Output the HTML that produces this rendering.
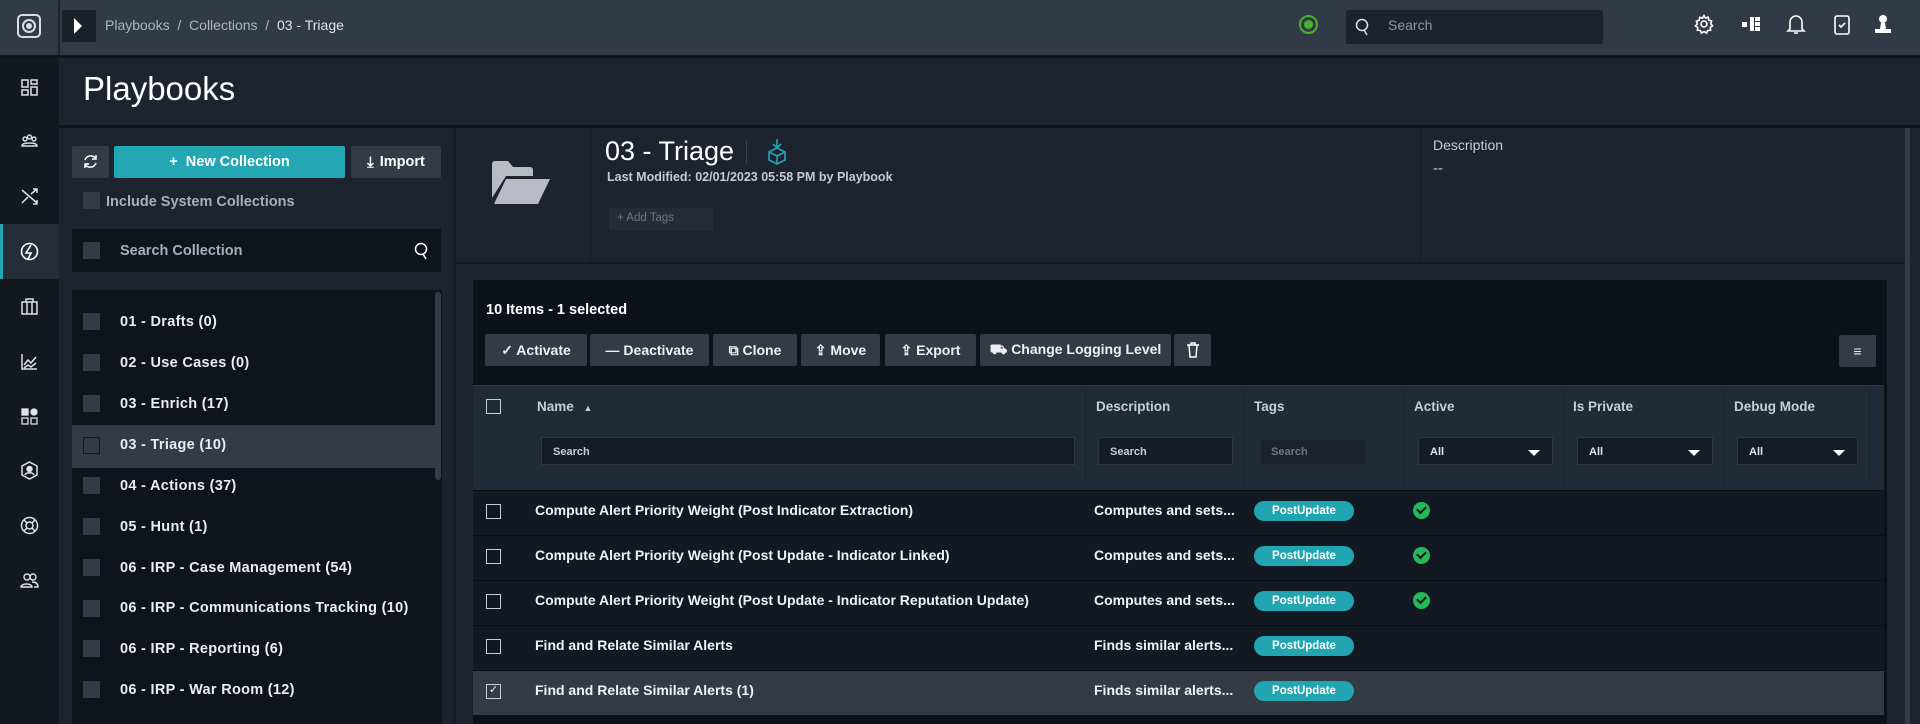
<!DOCTYPE html>
<html><head><meta charset="utf-8"><style>
*{box-sizing:border-box;margin:0;padding:0}
body{width:1920px;height:724px;overflow:hidden;background:#1e2330;font-family:"Liberation Sans",sans-serif;color:#e6e9ee;position:relative}
.a{position:absolute}
.cb{position:absolute;width:17px;height:17px;background:#343a46}
.cbo{position:absolute;width:15px;height:15px;border:1.5px solid #c9ced6;background:transparent}
.li{position:absolute;left:120px;font-size:14.5px;font-weight:bold;letter-spacing:0.3px;color:#e9ecf0}
.btn{position:absolute;top:334px;height:32px;background:#343a46;color:#eef0f3;font-size:14px;font-weight:bold;display:flex;align-items:center;justify-content:center;gap:8px;border-radius:2px}
.hd{position:absolute;top:399px;font-size:13.5px;font-weight:bold;color:#c8ced8}
.inp{position:absolute;top:437px;height:28px;background:#161c26;border:1px solid #2e3542;font-size:11px;font-weight:bold;color:#c8ced8;padding:8px 11px}
.sel{position:absolute;top:437px;height:28px;background:#161c26;border:1px solid #2e3542;font-size:11px;font-weight:bold;color:#dfe3e8;padding:8px 11px}
.sel:after{content:"";position:absolute;right:12px;top:12px;border-left:6px solid transparent;border-right:6px solid transparent;border-top:6px solid #fff}
.row{position:absolute;left:473px;width:1411px;height:45px;background:#131922;border-top:1px solid #0b0f15}
.nm{position:absolute;left:62px;top:11px;font-size:14px;font-weight:bold;color:#f0f2f5}
.ds{position:absolute;left:621px;top:11px;font-size:14px;font-weight:bold;color:#f0f2f5}
.pill{position:absolute;left:781px;top:10px;width:100px;height:20px;border-radius:10px;background:#21a5b0;color:#fff;font-size:11.5px;font-weight:bold;text-align:center;line-height:20px}
.ok{position:absolute;left:940px;top:11px;width:17px;height:17px;border-radius:50%;background:#23b85a}
.ok:after{content:"";position:absolute;left:4px;top:4px;width:7px;height:4px;border-left:2.5px solid #111;border-bottom:2.5px solid #111;transform:rotate(-45deg)}
.si{position:absolute;left:20px;width:19px;height:19px}
</style></head><body>
<div class="a" style="left:0;top:0;width:1920px;height:55px;background:#333a47"></div>
<div class="a" style="left:0;top:55px;width:1920px;height:3px;background:#0f131a"></div>
<div class="a" style="left:58px;top:0;width:2px;height:55px;background:#1e232c"></div>
<div class="a" style="left:17px;top:14px;width:24px;height:24px;border:2px solid #d9dde3;border-radius:5px"></div>
<div class="a" style="left:22px;top:19px;width:14px;height:14px;border:2px solid #d9dde3;border-radius:50%"></div>
<div class="a" style="left:26px;top:23px;width:6px;height:6px;background:#d9dde3;border-radius:50%"></div>
<div class="a" style="left:62px;top:10px;width:34px;height:32px;background:#1b212b"></div>
<div class="a" style="left:74px;top:18px;border-top:8px solid transparent;border-bottom:8px solid transparent;border-left:8px solid #fff"></div>
<div class="a" style="left:105px;top:17px;font-size:14px;color:#aeb5c0">Playbooks &nbsp;/&nbsp; Collections &nbsp;/ &nbsp;<span style="color:#dfe3e8">03 - Triage</span></div>
<div class="a" style="left:1299px;top:15px;width:19px;height:19px;border:2px solid #49b12e;border-radius:50%"></div>
<div class="a" style="left:1304px;top:20px;width:9px;height:9px;background:#49b12e;border-radius:50%"></div>
<div class="a" style="left:1346px;top:10px;width:257px;height:34px;background:#1d222c;border-radius:2px"></div>
<svg class="a" style="left:1355px;top:18px" width="14" height="18" viewBox="0 0 14 18" fill="none" stroke="#dfe3e8" stroke-width="1.5"><circle cx="7" cy="7" r="5.5"/><path d="M9 12l3 5"/></svg>
<div class="a" style="left:1388px;top:17px;font-size:14px;color:#8e96a3">Search</div>
<svg class="a" style="left:1694px;top:14px" width="20" height="20" viewBox="0 0 20 20" fill="none" stroke="#fff" stroke-width="1.6"><circle cx="10" cy="10" r="3"/><path d="M10 1.5l1.5 2.5 2.8-.8.5 2.9 2.8.9-1 2.7 2 2.1-2.4 1.6.4 2.9-2.9.2-1.2 2.6-2.5-1.5-2.5 1.5-1.2-2.6-2.9-.2.4-2.9L1.4 12l2-2.1-1-2.7 2.8-.9.5-2.9 2.8.8z"/></svg>
<svg class="a" style="left:1741px;top:14px" width="20" height="20" viewBox="0 0 20 20" fill="#fff"><rect x="1" y="8" width="5" height="5"/><rect x="9" y="3" width="4" height="14"/><rect x="14" y="3" width="5" height="4"/><rect x="14" y="8" width="5" height="4"/><rect x="14" y="13" width="5" height="4"/></svg>
<svg class="a" style="left:1786px;top:13px" width="20" height="22" viewBox="0 0 20 22" fill="none" stroke="#fff" stroke-width="1.6"><path d="M4 16V9a6 6 0 0 1 12 0v7l2 2H2z M8 20h4"/></svg>
<svg class="a" style="left:1833px;top:13px" width="18" height="22" viewBox="0 0 18 22" fill="none" stroke="#fff" stroke-width="1.6"><rect x="2" y="3" width="14" height="18" rx="2"/><path d="M6 12l2 2 4-4"/></svg>
<svg class="a" style="left:1874px;top:14px" width="18" height="20" viewBox="0 0 18 20" fill="#fff"><circle cx="9" cy="5" r="4"/><path d="M7 9h4l1 6h5v4H1v-4h5z"/></svg>
<div class="a" style="left:0;top:58px;width:59px;height:666px;background:#141920"></div>
<div class="a" style="left:0;top:224px;width:59px;height:55px;background:#262d39;border-left:3px solid #22a7b3"></div>
<svg class="si" style="top:78px" viewBox="0 0 19 19" fill="none" stroke="#dfe3e8" stroke-width="1.5"><rect x="2" y="2" width="6" height="7"/><rect x="11" y="2" width="6" height="4"/><rect x="2" y="12" width="6" height="5"/><rect x="11" y="9" width="6" height="8"/></svg>
<svg class="si" style="top:132px" viewBox="0 0 19 19" fill="none" stroke="#dfe3e8" stroke-width="1.4"><circle cx="5" cy="7" r="2"/><circle cx="9.5" cy="5" r="2"/><circle cx="14" cy="7" r="2"/><path d="M2 14c0-3 6-3 7.5-3s7.5 0 7.5 3z"/></svg>
<svg class="si" style="top:187px" viewBox="0 0 19 19" fill="none" stroke="#dfe3e8" stroke-width="1.5"><path d="M2 3l15 13M2 16l6-6M11 7l6-5M13 2h4v4M13 17h4v-4"/></svg>
<svg class="si" style="top:242px" viewBox="0 0 19 19" fill="none" stroke="#fff" stroke-width="1.6"><circle cx="9.5" cy="9.5" r="8"/><path d="M11 3L6 11h5l-3 6"/></svg>
<svg class="si" style="top:297px" viewBox="0 0 19 19" fill="none" stroke="#dfe3e8" stroke-width="1.5"><rect x="2" y="5" width="15" height="12"/><path d="M6 5V2h7v3M7 5v12M12 5v12"/></svg>
<svg class="si" style="top:352px" viewBox="0 0 19 19" fill="none" stroke="#dfe3e8" stroke-width="1.5"><path d="M2 2v15h15M4 13l4-5 3 3 5-6M4 16l4-3 3 2 5-4"/></svg>
<svg class="si" style="top:407px" viewBox="0 0 19 19" fill="#dfe3e8" stroke="#dfe3e8" stroke-width="1.3"><rect x="2" y="2" width="6" height="6"/><circle cx="14" cy="5" r="3"/><rect x="2" y="11" width="6" height="6" fill="none"/><rect x="11" y="11" width="6" height="6" fill="none"/></svg>
<svg class="si" style="top:461px" viewBox="0 0 19 19" fill="none" stroke="#dfe3e8" stroke-width="1.5"><path d="M9.5 1l7.5 4v9l-7.5 4-7.5-4V5z"/><circle cx="9.5" cy="8" r="2.5" fill="#dfe3e8"/><path d="M5 14c1-3 8-3 9 0"/></svg>
<svg class="si" style="top:516px" viewBox="0 0 19 19" fill="none" stroke="#dfe3e8" stroke-width="1.5"><circle cx="9.5" cy="9.5" r="8"/><circle cx="9.5" cy="9.5" r="3.5"/><path d="M4 4l3 3M15 4l-3 3M4 15l3-3M15 15l-3-3"/></svg>
<svg class="si" style="top:571px" viewBox="0 0 19 19" fill="none" stroke="#dfe3e8" stroke-width="1.4"><circle cx="7" cy="6" r="3"/><circle cx="13" cy="6" r="3"/><path d="M1 16c0-4 11-4 11 0zM12 11c3 0 6 1 6 5h-4"/></svg>
<div class="a" style="left:59px;top:58px;width:1861px;height:67px;background:#1e2330"></div>
<div class="a" style="left:83px;top:70px;font-size:33px;color:#fff">Playbooks</div>
<div class="a" style="left:59px;top:125px;width:1861px;height:3px;background:#0f131a"></div>
<div class="a" style="left:453px;top:128px;width:3px;height:596px;background:#151a22"></div>
<div class="a" style="left:72px;top:146px;width:37px;height:32px;background:#343a46;border-radius:2px"></div>
<svg class="a" style="left:82px;top:153px" width="17" height="17" viewBox="0 0 17 17" fill="none" stroke="#fff" stroke-width="1.5"><path d="M3 7a6 6 0 0 1 11-1M14 10a6 6 0 0 1-11 1M14 2v4h-4M3 15v-4h4"/></svg>
<div class="a" style="left:114px;top:146px;width:231px;height:32px;background:#22a7b3;border-radius:2px;font-size:14.5px;font-weight:bold;color:#fff;display:flex;align-items:center;justify-content:center">+&nbsp;&nbsp;New Collection</div>
<div class="a" style="left:351px;top:146px;width:90px;height:32px;background:#343a46;border-radius:2px;font-size:14.5px;font-weight:bold;color:#fff;display:flex;align-items:center;justify-content:center;gap:6px"><span style="font-size:15px">⤓</span>Import</div>
<div class="cb" style="left:83px;top:192px"></div>
<div class="a" style="left:106px;top:194px;font-size:14.5px;font-weight:bold;color:#a8afba">Include System Collections</div>
<div class="a" style="left:72px;top:229px;width:369px;height:43px;background:#0f131a"></div>
<div class="cb" style="left:83px;top:242px"></div>
<div class="a" style="left:120px;top:243px;font-size:14.5px;font-weight:bold;color:#a8afba">Search Collection</div>
<svg class="a" style="left:414px;top:242px" width="14" height="18" viewBox="0 0 14 18" fill="none" stroke="#fff" stroke-width="1.5"><circle cx="7" cy="7" r="5.5"/><path d="M9 12l3 5"/></svg>
<div class="a" style="left:72px;top:290px;width:370px;height:434px;background:#0f131a"></div>
<div class="a" style="left:435px;top:292px;width:6px;height:188px;background:#343a46;border-radius:3px"></div>
<div class="a" style="left:72px;top:425px;width:363px;height:43px;background:#343a46"></div>
<div class="cb" style="left:83px;top:313px"></div><div class="li" style="top:314px">01 - Drafts (0)</div>
<div class="cb" style="left:83px;top:354px"></div><div class="li" style="top:355px">02 - Use Cases (0)</div>
<div class="cb" style="left:83px;top:395px"></div><div class="li" style="top:396px">03 - Enrich (17)</div>
<div class="cb" style="left:83px;top:437px;border:1px solid #151a22"></div><div class="li" style="top:437px">03 - Triage (10)</div>
<div class="cb" style="left:83px;top:477px"></div><div class="li" style="top:478px">04 - Actions (37)</div>
<div class="cb" style="left:83px;top:518px"></div><div class="li" style="top:519px">05 - Hunt (1)</div>
<div class="cb" style="left:83px;top:559px"></div><div class="li" style="top:560px">06 - IRP - Case Management (54)</div>
<div class="cb" style="left:83px;top:600px"></div><div class="li" style="top:600px">06 - IRP - Communications Tracking (10)</div>
<div class="cb" style="left:83px;top:640px"></div><div class="li" style="top:641px">06 - IRP - Reporting (6)</div>
<div class="cb" style="left:83px;top:681px"></div><div class="li" style="top:682px">06 - IRP - War Room (12)</div>
<div class="a" style="left:590px;top:128px;width:1px;height:134px;background:#151a22"></div>
<div class="a" style="left:1420px;top:128px;width:1px;height:134px;background:#151a22"></div>
<div class="a" style="left:456px;top:262px;width:1450px;height:2px;background:#151a22"></div>
<div class="a" style="left:1905px;top:128px;width:5px;height:596px;background:#343a46"></div>
<svg class="a" style="left:492px;top:160px" width="58" height="44" viewBox="0 0 58 44" fill="#b8bcc2"><path d="M0 4a3 3 0 0 1 3-3h13l5 6h17a3 3 0 0 1 3 3v6H14L0 38z"/><path d="M14 19h44L46 44H2z"/></svg>
<div class="a" style="left:605px;top:136px;font-size:27px;color:#fff">03 - Triage</div>
<div class="a" style="left:746px;top:140px;width:1px;height:24px;background:#3a414d"></div>
<svg class="a" style="left:765px;top:138px" width="24" height="28" viewBox="0 0 24 28" fill="none" stroke="#22a7b3" stroke-width="1.6"><path d="M12 1v8M8 6l4 4 4-4"/><path d="M4 14l8-4 8 4v8l-8 4-8-4z M4 14l8 4 8-4M12 18v8"/></svg>
<div class="a" style="left:607px;top:170px;font-size:12.5px;font-weight:bold;color:#c5cbd4">Last Modified: 02/01/2023 05:58 PM by Playbook</div>
<div class="a" style="left:609px;top:208px;width:104px;height:22px;background:#262c37;font-size:11.5px;color:#6e7682;padding:4px 8px">+ Add Tags</div>
<div class="a" style="left:1433px;top:137px;font-size:14px;color:#c8ced8">Description</div>
<div class="a" style="left:1433px;top:160px;font-size:15px;color:#c8ced8">--</div>
<div class="a" style="left:473px;top:280px;width:1414px;height:444px;background:#0d1219"></div>
<div class="a" style="left:486px;top:302px;font-size:14.5px;font-weight:bold;color:#fff">10 Items - 1 selected</div>
<div class="btn" style="left:485px;width:102px">✓ Activate</div>
<div class="btn" style="left:590px;width:119px">— Deactivate</div>
<div class="btn" style="left:713px;width:84px">⧉ Clone</div>
<div class="btn" style="left:801px;width:79px">⇪ Move</div>
<div class="btn" style="left:885px;width:91px">⇪ Export</div>
<div class="btn" style="left:980px;width:191px">⛟ Change Logging Level</div>
<div class="btn" style="left:1174px;width:37px"><svg width="14" height="16" viewBox="0 0 14 16" fill="none" stroke="#fff" stroke-width="1.5"><path d="M1 3h12M5 3V1h4v2M3 3l1 12h6l1-12"/></svg></div>
<div class="btn" style="left:1839px;width:37px;top:335px">≡</div>
<div class="a" style="left:473px;top:385px;width:1411px;height:105px;background:#212a37;border-top:1px solid #2e3a4a"></div>
<div class="a" style="left:1085px;top:390px;width:1px;height:95px;background:#1b2330"></div>
<div class="a" style="left:1243px;top:390px;width:1px;height:95px;background:#1b2330"></div>
<div class="a" style="left:1403px;top:390px;width:1px;height:95px;background:#1b2330"></div>
<div class="a" style="left:1564px;top:390px;width:1px;height:95px;background:#1b2330"></div>
<div class="a" style="left:1724px;top:390px;width:1px;height:95px;background:#1b2330"></div>
<div class="a" style="left:1869px;top:390px;width:1px;height:95px;background:#1b2330"></div>
<div class="cbo" style="left:486px;top:399px"></div>
<div class="hd" style="left:537px">Name <span style="font-size:9px;margin-left:6px">▲</span></div>
<div class="hd" style="left:1096px">Description</div>
<div class="hd" style="left:1254px">Tags</div>
<div class="hd" style="left:1414px">Active</div>
<div class="hd" style="left:1573px">Is Private</div>
<div class="hd" style="left:1734px">Debug Mode</div>
<div class="inp" style="left:541px;width:534px">Search</div>
<div class="inp" style="left:1098px;width:135px">Search</div>
<div class="inp" style="left:1261px;width:104px;top:440px;height:24px;border:none;background:#1b222d;color:#6e7682;padding:6px 10px">Search</div>
<div class="sel" style="left:1418px;width:135px">All</div>
<div class="sel" style="left:1577px;width:136px">All</div>
<div class="sel" style="left:1737px;width:121px">All</div>
<div class="row" style="top:490px"><div class="cbo" style="left:13px;top:13px"></div><div class="nm">Compute Alert Priority Weight (Post Indicator Extraction)</div><div class="ds">Computes and sets...</div><div class="pill">PostUpdate</div><div class="ok"></div></div>
<div class="row" style="top:535px"><div class="cbo" style="left:13px;top:13px"></div><div class="nm">Compute Alert Priority Weight (Post Update - Indicator Linked)</div><div class="ds">Computes and sets...</div><div class="pill">PostUpdate</div><div class="ok"></div></div>
<div class="row" style="top:580px"><div class="cbo" style="left:13px;top:13px"></div><div class="nm">Compute Alert Priority Weight (Post Update - Indicator Reputation Update)</div><div class="ds">Computes and sets...</div><div class="pill">PostUpdate</div><div class="ok"></div></div>
<div class="row" style="top:625px"><div class="cbo" style="left:13px;top:13px"></div><div class="nm">Find and Relate Similar Alerts</div><div class="ds">Finds similar alerts...</div><div class="pill">PostUpdate</div></div>
<div class="row" style="top:670px;background:#343a46"><div class="cbo" style="left:13px;top:13px;font-size:11px;line-height:11px;color:#fff;text-align:center">✓</div><div class="nm">Find and Relate Similar Alerts (1)</div><div class="ds">Finds similar alerts...</div><div class="pill">PostUpdate</div></div>
</body></html>
